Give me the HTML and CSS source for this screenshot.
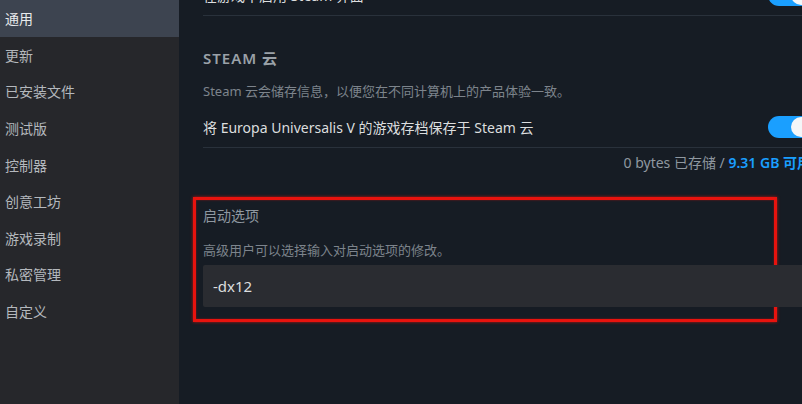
FILE: index.html
```html
<!DOCTYPE html>
<html lang="zh-CN">
<head>
<meta charset="utf-8">
<link rel="stylesheet" href="styles.css">
</head>
<body>
<div class="app">
  <nav class="sidebar">
    <div class="nav-item active">通用</div>
    <div class="nav-item">更新</div>
    <div class="nav-item">已安装文件</div>
    <div class="nav-item">测试版</div>
    <div class="nav-item">控制器</div>
    <div class="nav-item">创意工坊</div>
    <div class="nav-item">游戏录制</div>
    <div class="nav-item">私密管理</div>
    <div class="nav-item">自定义</div>
  </nav>
  <main class="main">
    <div class="content">
      <div class="row row-top">
        <span class="row-label">在游戏中启用 Steam 界面</span>
        <span class="toggle"><span class="knob"></span></span>
      </div>
      <div class="section-title">STEAM 云</div>
      <div class="desc">Steam 云会储存信息，以便您在不同计算机上的产品体验一致。</div>
      <div class="row">
        <span class="row-label">将 Europa Universalis V 的游戏存档保存于 Steam 云</span>
        <span class="toggle"><span class="knob"></span></span>
      </div>
      <div class="storage">0 bytes 已存储 / <span class="avail">9.31 GB 可用</span></div>
      <div class="launch">
        <div class="launch-title">启动选项</div>
        <div class="desc launch-desc">高级用户可以选择输入对启动选项的修改。</div>
        <div class="launch-input">-dx12</div>
      </div>
    </div>
  </main>
</div>
</body>
</html>
```
FILE: styles.css
```css
html, body {
  margin: 0;
  padding: 0;
  width: 802px;
  height: 404px;
  overflow: hidden;
  background: #161c24;
  font-family: "Noto Sans", "Noto Sans CJK SC", sans-serif;
}

.app {
  display: flex;
  width: 802px;
  height: 404px;
}

.sidebar {
  width: 179px;
  flex: none;
  background: #26272b;
  display: flex;
  flex-direction: column;
}

.nav-item {
  height: 36.6px;
  display: flex;
  align-items: center;
  padding-left: 5px;
  font-size: 14px;
  color: #b4b8bd;
}

.nav-item.active {
  background: #3d4450;
  color: #e8eaec;
}

.main {
  flex: 1;
  overflow: hidden;
  background: #161c24;
}

.content {
  width: 609px;
  margin-left: 24px;
}

.row {
  height: 40px;
  display: flex;
  align-items: center;
  justify-content: space-between;
  border-bottom: 1px solid #29313b;
  margin-top: 7px;
}

.row-top {
  margin-top: -25px;
}

.row-label {
  font-size: 14px;
  color: #dcdedf;
}

.toggle {
  width: 44px;
  height: 22px;
  border-radius: 11px;
  background: #1a9fff;
  display: flex;
  align-items: center;
  justify-content: flex-end;
  padding: 0 1px;
  box-sizing: border-box;
}

.knob {
  width: 20px;
  height: 20px;
  border-radius: 50%;
  background: #f4f6f8;
}

.section-title {
  margin-top: 32px;
  line-height: 20px;
  font-size: 15px;
  font-weight: 600;
  letter-spacing: 1px;
  color: #9aa1a8;
}

.desc {
  margin-top: 14px;
  line-height: 18px;
  font-size: 13px;
  color: #7d848c;
}

.storage {
  margin-top: 6px;
  line-height: 18px;
  font-size: 14px;
  color: #8f98a0;
  text-align: right;
  padding-right: 1px;
}

.avail {
  color: #1a9fff;
  font-weight: 600;
}

.launch {
  margin-top: 25px;
  margin-left: -10px;
  width: 584px;
  box-sizing: border-box;
  border: 3px solid #e8130e;
  box-shadow: 0 0 3px rgba(255, 20, 10, 0.7), inset 0 0 2px rgba(255, 20, 10, 0.5);
  padding: 6px 0 12px 7px;
}

.launch-title {
  line-height: 20px;
  font-size: 14px;
  color: #8f98a0;
}

.launch-desc {
  margin-top: 15px;
}

.launch-input {
  margin-top: 6px;
  width: 640px;
  height: 42px;
  box-sizing: border-box;
  background: #2a2c31;
  border-radius: 2px;
  padding-left: 10px;
  display: flex;
  align-items: center;
  font-size: 15px;
  color: #dcdedf;
}
```
